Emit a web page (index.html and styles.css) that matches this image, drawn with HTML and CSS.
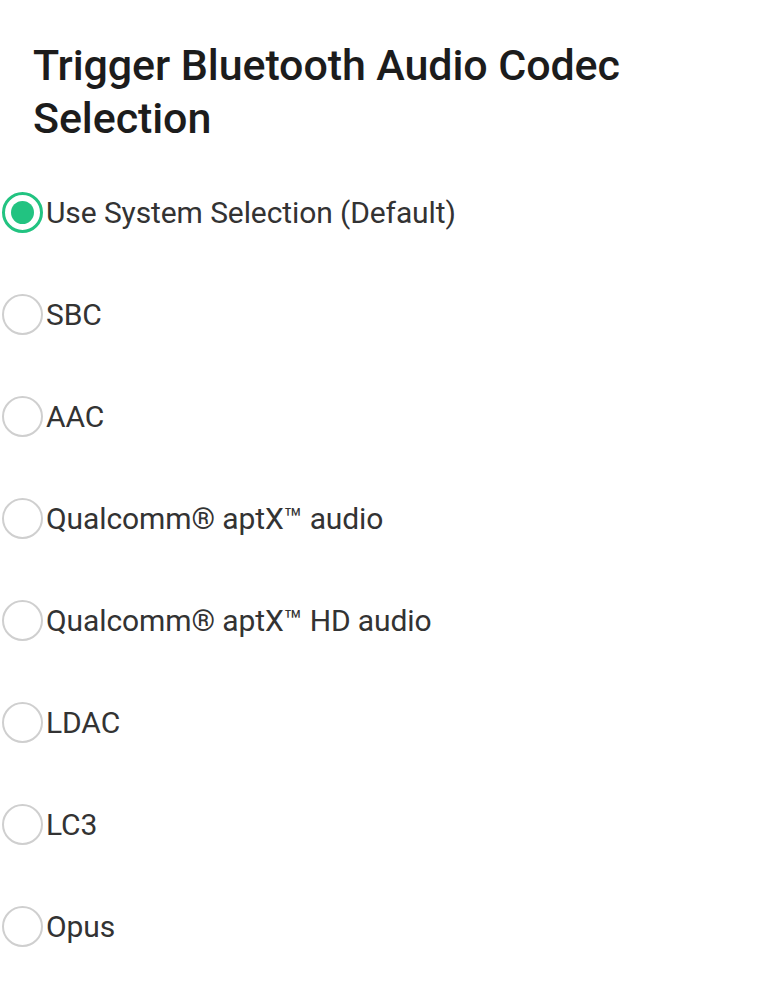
FILE: index.html
```html
<!DOCTYPE html>
<html lang="en">
<head>
  <meta charset="UTF-8">
  <title>Trigger Bluetooth Audio Codec Selection</title>
  <link rel="stylesheet" href="styles.css">
</head>
<body>

<div class="codec-box">
  <h1>Trigger Bluetooth Audio Codec Selection</h1>

  <div class="options">
    <label class="option">
      <input type="radio" name="codec" value="default" checked>
      <span class="dot"></span>
      <span>Use System Selection (Default)</span>
    </label>
    <label class="option">
      <input type="radio" name="codec" value="sbc">
      <span class="dot"></span>
      <span>SBC</span>
    </label>
    <label class="option">
      <input type="radio" name="codec" value="aac">
      <span class="dot"></span>
      <span>AAC</span>
    </label>
    <label class="option">
      <input type="radio" name="codec" value="aptx">
      <span class="dot"></span>
      <span>Qualcomm® aptX™ audio</span>
    </label>
    <label class="option">
      <input type="radio" name="codec" value="aptxhd">
      <span class="dot"></span>
      <span>Qualcomm® aptX™ HD audio</span>
    </label>
    <label class="option">
      <input type="radio" name="codec" value="ldac">
      <span class="dot"></span>
      <span>LDAC</span>
    </label>
    <label class="option">
      <input type="radio" name="codec" value="lc3">
      <span class="dot"></span>
      <span>LC3</span>
    </label>
    <label class="option">
      <input type="radio" name="codec" value="opus">
      <span class="dot"></span>
      <span>Opus</span>
    </label>
  </div>
</div>

</body>
</html>
```

FILE: styles.css
```css
body {
  margin: 0;
  background: #fff;
  font-family: Roboto, "Liberation Sans", sans-serif;
}
.codec-box {
  padding-top: 39px;
}
h1 {
  margin: 0 0 16px 0;
  padding: 0 30px 0 33px;
  font-size: 43px;
  line-height: 53px;
  font-weight: 500;
  letter-spacing: -0.1px;
  color: #1c1c1c;
}
.option {
  display: flex;
  align-items: center;
  height: 102px;
  font-size: 30px;
  letter-spacing: -0.1px;
  color: #333;
  cursor: pointer;
}
.option input {
  display: none;
}
.dot {
  box-sizing: border-box;
  width: 41px;
  height: 41px;
  margin-left: 2px;
  margin-right: 3px;
  border: 2.5px solid #cfcfcf;
  border-radius: 50%;
  display: flex;
  align-items: center;
  justify-content: center;
}
.option input:checked + .dot {
  border: 3px solid #22c381;
}
.option input:checked + .dot::after {
  content: "";
  width: 23px;
  height: 23px;
  border-radius: 50%;
  background: #22c381;
}
```
